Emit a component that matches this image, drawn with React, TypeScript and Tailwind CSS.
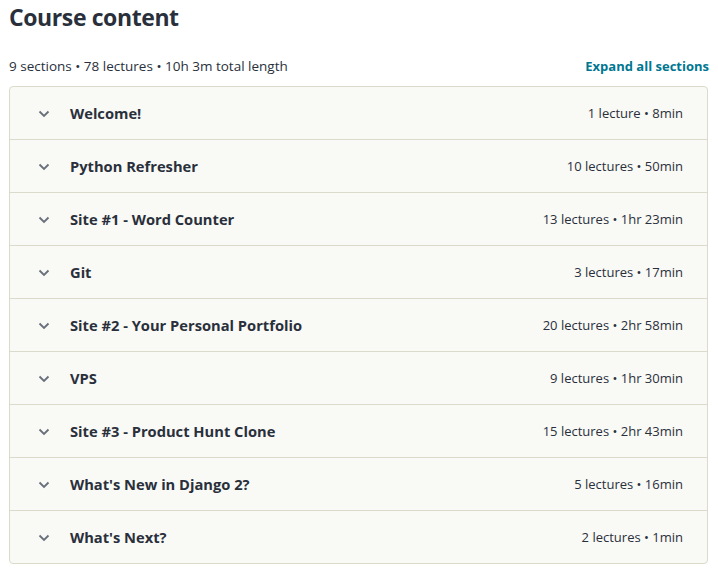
import React from "react";

const sections: [string, string][] = [
  ["Welcome!", "1 lecture • 8min"],
  ["Python Refresher", "10 lectures • 50min"],
  ["Site #1 - Word Counter", "13 lectures • 1hr 23min"],
  ["Git", "3 lectures • 17min"],
  ["Site #2 - Your Personal Portfolio", "20 lectures • 2hr 58min"],
  ["VPS", "9 lectures • 1hr 30min"],
  ["Site #3 - Product Hunt Clone", "15 lectures • 2hr 43min"],
  ["What's New in Django 2?", "5 lectures • 16min"],
  ["What's Next?", "2 lectures • 1min"],
];

function Chevron() {
  return (
    <svg width="12" height="8" viewBox="0 0 12 8" className="shrink-0">
      <path d="M1.5 1.5 L6 6 L10.5 1.5" fill="none" stroke="#686f7a" strokeWidth="1.8" />
    </svg>
  );
}

export default function App() {
  return (
    <div
      className="w-[718px] h-[571px] bg-white text-[#29303b] pl-[9px] pr-[9px] overflow-hidden"
      style={{ fontFamily: '"Open Sans", "Noto Sans", sans-serif' }}
    >
      <h2 className="text-[23px] font-bold leading-[34px] pt-0 tracking-[-0.4px]">Course content</h2>
      <div className="flex items-end justify-between mt-[22px] h-[20px]">
        <span className="text-[13.5px] leading-[20px]">9 sections • 78 lectures • 10h 3m total length</span>
        <span className="text-[13px] font-bold text-[#007791] leading-[20px]">Expand all sections</span>
      </div>
      <div className="mt-[10px] mr-[1px] border border-[#dcdacb] rounded-[4px] bg-[#f9f9f6]">
        {sections.map(([title, meta], i) => (
          <div
            key={i}
            className={`flex items-center pl-[28px] pr-[24px] pt-[1px] ${i < sections.length - 1 ? "h-[53px] border-b border-[#dcdacb]" : "h-[52px]"}`}
          >
            <Chevron />
            <span className="ml-[20px] text-[14.7px] font-bold">{title}</span>
            <span className="ml-auto text-[13px]">{meta}</span>
          </div>
        ))}
      </div>
    </div>
  );
}
